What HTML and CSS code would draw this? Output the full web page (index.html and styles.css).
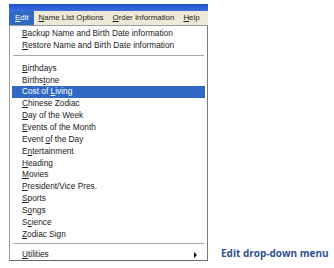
FILE: index.html
```html
<!DOCTYPE html>
<html lang="en">
<head>
    <meta charset="UTF-8">
    <title>Edit drop-down menu</title>
    <link rel="stylesheet" href="styles.css">
</head>
<body>
    <div class="page">
        <div class="window">
            <div class="title-strip"></div>
            <div class="menubar">
                <span class="menu-title active"><u>E</u>dit</span>
                <span class="menu-title"><u>N</u>ame List Options</span>
                <span class="menu-title"><u>O</u>rder Information</span>
                <span class="menu-title"><u>H</u>elp</span>
            </div>
            <div class="dropdown">
                <div class="item"><u>B</u>ackup Name and Birth Date information</div>
                <div class="item"><u>R</u>estore Name and Birth Date information</div>
                <div class="separator"></div>
                <div class="item"><u>B</u>irthdays</div>
                <div class="item">Births<u>t</u>one</div>
                <div class="item selected">Cost of <u>L</u>iving</div>
                <div class="item"><u>C</u>hinese Zodiac</div>
                <div class="item"><u>D</u>ay of the Week</div>
                <div class="item"><u>E</u>vents of the Month</div>
                <div class="item">Event <u>o</u>f the Day</div>
                <div class="item">E<u>n</u>tertainment</div>
                <div class="item"><u>H</u>eading</div>
                <div class="item"><u>M</u>ovies</div>
                <div class="item"><u>P</u>resident/Vice Pres.</div>
                <div class="item"><u>S</u>ports</div>
                <div class="item">S<u>o</u>ngs</div>
                <div class="item">S<u>c</u>ience</div>
                <div class="item"><u>Z</u>odiac Sign</div>
                <div class="separator last"></div>
                <div class="item submenu"><span><u>U</u>tilities</span><span class="arrow"></span></div>
            </div>
        </div>
        <div class="caption">Edit drop-down menu</div>
    </div>
</body>
</html>
```

FILE: styles.css
```css
* {
    box-sizing: border-box;
    margin: 0;
    padding: 0;
}
body {
    background-color: white;
    font-family: "Liberation Sans", Arial, sans-serif;
    font-size: 8.3px;
    color: #222;
}
.page {
    display: flex;
    align-items: flex-end;
    padding: 4px 0 0 9px;
}
.window {
    width: 199px;
}
.title-strip {
    height: 7px;
    background: linear-gradient(#1f4fc8, #3a6ee0);
}
.menubar {
    display: flex;
    height: 14px;
    background-color: #ece9d8;
    font-size: 7.9px;
    line-height: 14px;
    white-space: nowrap;
    overflow: hidden;
}
.menu-title {
    padding: 0 4px 0 5px;
}
.menu-title.active {
    padding: 0 5px 0 6px;
    background-color: #316ac5;
    color: white;
}
.dropdown {
    background-color: white;
    border: 1px solid #9d9d9d;
    border-right-color: #7a7a7a;
    border-bottom-color: #6a6a6a;
    padding: 2px 2px 0 2px;
    box-shadow: 0 1px 0 #c8c8c8;
}
.item {
    height: 11.86px;
    line-height: 11.86px;
    padding-left: 10px;
    white-space: nowrap;
}
.item.selected {
    background-color: #316ac5;
    color: white;
}
.separator {
    height: 8px;
}
.separator::after {
    content: "";
    display: block;
    margin: 3px 1px 0 1px;
    border-top: 1px solid #aca899;
}
.separator.last {
    height: 6px;
}
.separator.last::after {
    margin-top: 2px;
}
.submenu {
    display: flex;
    justify-content: space-between;
    align-items: center;
    padding-right: 8px;
}
.arrow {
    width: 0;
    height: 0;
    border-top: 3px solid transparent;
    border-bottom: 3px solid transparent;
    border-left: 3px solid #111;
}
.caption {
    margin: 0 0 1px 13px;
    font-family: "Open Sans", "Liberation Sans", sans-serif;
    font-weight: bold;
    font-size: 10px;
    color: #2f5193;
    white-space: nowrap;
}
```
